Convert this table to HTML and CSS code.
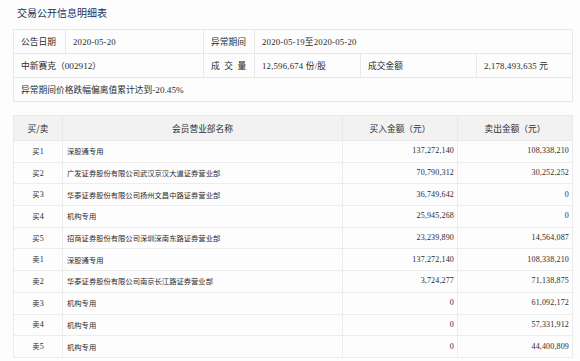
FILE: index.html
```html
<!DOCTYPE html>
<html lang="zh">
<head>
<meta charset="utf-8">
<link rel="stylesheet" href="styles.css">
</head>
<body>
<div class="page">
  <h1 class="title">交易公开信息明细表</h1>
  <table class="info">
    <colgroup>
      <col style="width:52px"><col style="width:138px"><col style="width:51px"><col style="width:106px"><col style="width:116px"><col style="width:96px">
    </colgroup>
    <tr>
      <td>公告日期</td>
      <td class="num">2020-05-20</td>
      <td>异常期间</td>
      <td colspan="3" class="num">2020-05-19至2020-05-20</td>
    </tr>
    <tr>
      <td colspan="2">中新赛克（<span class="num">002912</span>）</td>
      <td class="spaced">成 交 量</td>
      <td class="num">12,596,674 份/股</td>
      <td>成交金额</td>
      <td class="num">2,178,493,635 元</td>
    </tr>
    <tr>
      <td colspan="6">异常期间价格跌幅偏离值累计达到<span class="num">-20.45%</span></td>
    </tr>
  </table>

  <table class="detail">
    <colgroup>
      <col style="width:49px"><col style="width:280px"><col style="width:115px"><col style="width:115px">
    </colgroup>
    <thead>
      <tr><th>买/卖</th><th>会员营业部名称</th><th>买入金额（元）</th><th>卖出金额（元）</th></tr>
    </thead>
    <tbody>
      <tr><td class="side">买<span class="n">1</span></td><td>深股通专用</td><td class="amt">137,272,140</td><td class="amt">108,338,210</td></tr>
      <tr><td class="side">买<span class="n">2</span></td><td>广发证券股份有限公司武汉京汉大道证券营业部</td><td class="amt">70,790,312</td><td class="amt">30,252,252</td></tr>
      <tr><td class="side">买<span class="n">3</span></td><td>华泰证券股份有限公司扬州文昌中路证券营业部</td><td class="amt">36,749,642</td><td class="amt">0</td></tr>
      <tr><td class="side">买<span class="n">4</span></td><td>机构专用</td><td class="amt">25,945,268</td><td class="amt">0</td></tr>
      <tr><td class="side">买<span class="n">5</span></td><td>招商证券股份有限公司深圳深南东路证券营业部</td><td class="amt">23,239,890</td><td class="amt">14,564,087</td></tr>
      <tr><td class="side">卖<span class="n">1</span></td><td>深股通专用</td><td class="amt">137,272,140</td><td class="amt">108,338,210</td></tr>
      <tr><td class="side">卖<span class="n">2</span></td><td>华泰证券股份有限公司南京长江路证券营业部</td><td class="amt">3,724,277</td><td class="amt">71,138,875</td></tr>
      <tr><td class="side">卖<span class="n">3</span></td><td>机构专用</td><td class="amt">0</td><td class="amt">61,092,172</td></tr>
      <tr><td class="side">卖<span class="n">4</span></td><td>机构专用</td><td class="amt">0</td><td class="amt">57,331,912</td></tr>
      <tr><td class="side">卖<span class="n">5</span></td><td>机构专用</td><td class="amt">0</td><td class="amt">44,400,809</td></tr>
    </tbody>
  </table>
</div>
</body>
</html>
```
FILE: styles.css
```css
html, body {
  margin: 0;
  padding: 0;
  background: #fdfdfd;
}
body {
  font-family: "Noto Sans CJK SC", "Liberation Serif", serif;
  color: #2b2b2b;
}
.page {
  padding: 6px 0 0 13px;
  width: 560px;
}
.title {
  margin: 0 0 0 4px;
  font-size: 10px;
  line-height: 14px;
  font-weight: normal;
  color: #1d2f5c;
  height: 23px;
}
table {
  border-collapse: collapse;
  table-layout: fixed;
  width: 560px;
}
.info td {
  border: 1px solid #e8e8e8;
  background: #fdfdfd;
  height: 23px;
  padding: 0 0 0 7px;
  font-size: 8.75px;
  line-height: 12px;
  white-space: nowrap;
  overflow: hidden;
}
.num {
  font-family: "Liberation Serif", "Noto Sans CJK SC", serif;
  font-size: 9.2px;
}
.info td.num {
  font-family: "Liberation Serif", "Noto Sans CJK SC", serif;
  letter-spacing: 0.2px;
}
.info td.spaced {
  word-spacing: 2.5px;
}
.detail {
  margin-top: 13px;
}
.detail th {
  background: #f2f2f2;
  border: 1px solid #e8e8e8;
  height: 24px;
  font-weight: normal;
  font-size: 8.7px;
  color: #2b2b2b;
  text-align: center;
  padding: 0;
}
.detail td {
  border: 1px solid #ececec;
  background: #fdfdfd;
  height: 20.7px;
  padding: 0 4px;
  font-size: 7.3px;
  line-height: 10px;
  white-space: nowrap;
  overflow: hidden;
}
.detail td.side {
  text-align: center;
  padding: 0;
}
.n {
  font-family: "Liberation Serif", serif;
  font-size: 8px;
}
.detail td.amt {
  text-align: right;
  font-family: "Liberation Serif", serif;
  font-size: 8px;
  letter-spacing: 0.15px;
  padding-right: 3px;
}
```
